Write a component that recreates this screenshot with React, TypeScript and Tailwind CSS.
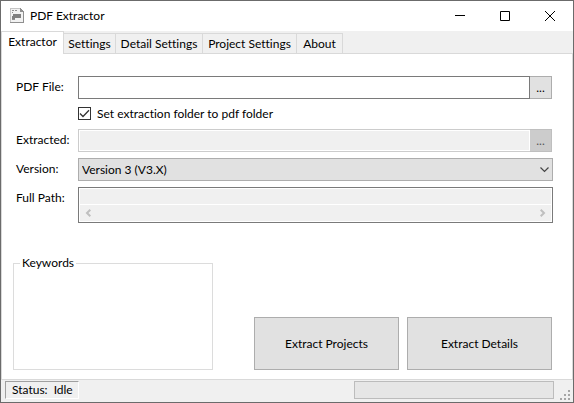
import type { ReactNode } from "react";

const tabs = [
  { name: "Settings", width: "w-[52px]" },
  { name: "Detail Settings", width: "w-[87px]" },
  { name: "Project Settings", width: "w-[94px]" },
  { name: "About", width: "w-[46px]" },
];

function BrowseButton({ label, disabled = false }: { label: string; disabled?: boolean }) {
  return (
    <button
      type="button"
      aria-label={label}
      disabled={disabled}
      className="h-[23px] w-[22px] shrink-0 border border-l-0 border-[#adadad] bg-[#e1e1e1] text-center disabled:border-[#bfbfbf] disabled:bg-[#cccccc] disabled:text-[#555555]"
    >
      ...
    </button>
  );
}

function Field({ label, id, children }: { label: string; id: string; children: ReactNode }) {
  return (
    <div className="flex items-start">
      <label htmlFor={id} className="w-[62px] shrink-0 leading-[21px]">
        {label}
      </label>
      {children}
    </div>
  );
}

function TitleBar() {
  return (
    <header className="flex h-[30px] shrink-0 items-center bg-white pr-px pl-2">
      <svg width="16" height="16" viewBox="0 0 16 16" shapeRendering="crispEdges" aria-hidden="true">
        <path d="M1 0h10l4 3v12H1z" fill="#f2f2f2" />
        <path d="M1 0h10v1H2v13H1z" fill="#c4c4c4" />
        <path d="M11 0h1v1h1v1h1v1h1v12H1v-1h13V4h-3z" fill="#8f8f8f" />
        <path d="M3 2h2v1H3zM6 2h2v1H6zM3 4h1v1H3zM3 11h3v1H3z" fill="#8f8f8f" />
        <path d="M4 6h8v4H6v1H3V8h1z" fill="#808080" />
      </svg>
      <h1 className="ml-[5px] grow text-xs">PDF Extractor</h1>
      <button type="button" aria-label="Minimize" className="flex h-full w-[45px] items-center justify-center">
        <svg width="10" height="10" shapeRendering="crispEdges">
          <path d="M0 4h10v1H0z" />
        </svg>
      </button>
      <button type="button" aria-label="Maximize" className="flex h-full w-[45px] items-center justify-center">
        <svg width="10" height="10" fill="none" stroke="#000">
          <path d="M.5 .5h9v9h-9z" />
        </svg>
      </button>
      <button type="button" aria-label="Close" className="flex h-full w-[45px] items-center justify-center">
        <svg width="10" height="10" stroke="#000">
          <path d="M0 0l10 10M10 0L0 10" />
        </svg>
      </button>
    </header>
  );
}

function TabStrip() {
  return (
    <div className="flex h-[23px] shrink-0 items-stretch bg-[#f0f0f0]" role="tablist">
      <button
        type="button"
        role="tab"
        aria-selected="true"
        className="w-[63px] border-x border-t border-[#d9d9d9] bg-white pb-[2px]"
      >
        Extractor
      </button>
      <div className="flex grow border-b border-[#d9d9d9] pt-[2px]">
        {tabs.map((tab) => (
          <button
            key={tab.name}
            type="button"
            role="tab"
            aria-selected="false"
            className={`border-t border-r border-[#d9d9d9] whitespace-nowrap ${tab.width}`}
          >
            {tab.name}
          </button>
        ))}
      </div>
    </div>
  );
}

export default function App() {
  return (
    <div className="flex min-h-screen flex-col border border-[#6b6b6b] bg-white font-['Lato','Open_Sans',sans-serif] text-xs text-black [font-variant-ligatures:none]">
      <TitleBar />
      <TabStrip />
      <main className="flex grow flex-col border-x border-b border-[#d9d9d9] pt-[22px] pb-[9px]">
        <form className="flex flex-col gap-[6px] pr-5 pl-[14px]">
          <Field label="PDF File:" id="pdf">
            <input id="pdf" className="h-[23px] min-w-0 grow border border-[#7a7a7a] bg-white px-1 outline-none" />
            <BrowseButton label="Browse for PDF file" />
          </Field>
          <label className="mt-[2px] mb-[3px] ml-[62px] flex h-[13px] items-center gap-[6px]">
            <span className="grid">
              <input
                type="checkbox"
                defaultChecked
                className="peer col-start-1 row-start-1 size-[13px] appearance-none border border-[#333333] bg-white"
              />
              <svg
                viewBox="0 0 13 13"
                className="pointer-events-none invisible col-start-1 row-start-1 size-[13px] fill-none stroke-[#333333] peer-checked:visible"
              >
                <path d="M2 6.5l3 3 6-6.2" strokeWidth="1.3" />
              </svg>
            </span>
            Set extraction folder to pdf folder
          </label>
          <Field label="Extracted:" id="extracted">
            <input
              id="extracted"
              disabled
              className="h-[23px] min-w-0 grow border border-r-0 border-[#cccccc] bg-[#f0f0f0] px-1 inset-ring inset-ring-white"
            />
            <BrowseButton label="Browse for extraction folder" disabled />
          </Field>
          <Field label="Version:" id="version">
            <div className="-mr-px grid min-w-0 grow items-center">
              <select
                id="version"
                className="col-start-1 row-start-1 h-[23px] w-full appearance-none border border-[#adadad] bg-[#e1e1e1] px-[3px]"
              >
                <option>Version 3 (V3.X)</option>
              </select>
              <svg
                width="9"
                height="6"
                className="pointer-events-none col-start-1 row-start-1 mr-1 justify-self-end fill-none stroke-[#444444]"
              >
                <path d="M.5 .5l4 4 4-4" strokeWidth="1.2" />
              </svg>
            </div>
          </Field>
          <Field label="Full Path:" id="path">
            <div className="-mr-px flex min-w-0 grow flex-col gap-px border border-[#7a7a7a] bg-white p-px">
              <textarea id="path" readOnly className="block h-[15px] w-full resize-none overflow-hidden bg-[#f0f0f0]" />
              <div className="flex h-4 items-center justify-between bg-[#f0f0f0] px-[5px]">
                <button type="button" aria-label="Scroll left" disabled>
                  <svg width="6" height="8" fill="none" stroke="#bfbfbf" strokeWidth="2" className="block">
                    <path d="M5.3 .8L2 4l3.3 3.2" />
                  </svg>
                </button>
                <button type="button" aria-label="Scroll right" disabled>
                  <svg width="6" height="8" fill="none" stroke="#bfbfbf" strokeWidth="2" className="block">
                    <path d="M.7 .8L4 4 .7 7.2" />
                  </svg>
                </button>
              </div>
            </div>
          </Field>
        </form>
        <div className="mt-auto flex items-end justify-between pr-5 pl-[11px]">
          <fieldset className="h-[115px] w-[200px] border border-[#dcdcdc] pl-[6px]">
            <legend className="px-[2px] leading-4">Keywords</legend>
          </fieldset>
          <div className="flex gap-2">
            <button type="button" className="h-[53px] w-[145px] border border-[#adadad] bg-[#e1e1e1]">
              Extract Projects
            </button>
            <button type="button" className="h-[53px] w-[145px] border border-[#adadad] bg-[#e1e1e1]">
              Extract Details
            </button>
          </div>
        </div>
      </main>
      <footer className="flex h-[22px] shrink-0 items-start bg-[#f0f0f0] pt-px pr-px pl-1">
        <output className="flex h-[18px] w-[74px] items-center gap-[6px] border border-t-[#a0a0a0] border-r-white border-b-white border-l-[#a0a0a0] pl-[6px]">
          <span>Status:</span>
          <span>Idle</span>
        </output>
        <div
          role="progressbar"
          aria-label="Extraction progress"
          aria-valuenow={0}
          className="ml-auto h-[18px] w-[200px] border border-[#bcbcbc] bg-[#e6e6e6]"
        />
        <svg width="12" height="12" fill="#a6a6a6" className="ml-[6px] self-end" shapeRendering="crispEdges">
          <path d="M8 0h2v2H8zM4 4h2v2H4zM8 4h2v2H8zM0 8h2v2H0zM4 8h2v2H4zM8 8h2v2H8z" />
        </svg>
      </footer>
    </div>
  );
}
